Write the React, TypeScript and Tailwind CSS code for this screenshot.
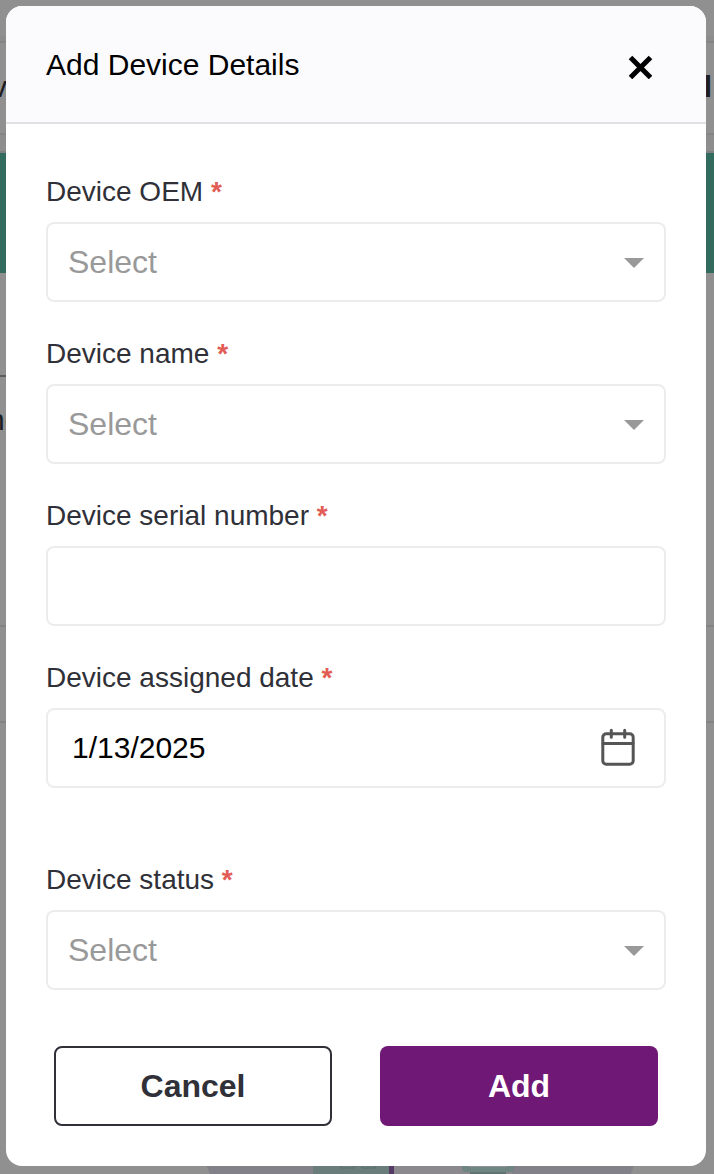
import React, { useState } from 'react';

const labelClass = 'text-[28px] leading-9 text-[#2f3038]';
const boxClass = 'block w-full h-20 rounded-lg border-2 border-[#ececec] bg-white outline-none';

const Required: React.FC = () => <span className="font-bold text-[#e25c56]">*</span>;

const SelectField: React.FC<{ id: string; label: string; options: string[] }> = ({ id, label, options }) => {
  const [value, setValue] = useState('');

  return (
    <div className="flex flex-col gap-3">
      <label htmlFor={id} className={labelClass}>
        {label} <Required />
      </label>
      <div className="relative">
        <select
          id={id}
          value={value}
          onChange={(e) => setValue(e.target.value)}
          className={`${boxClass} appearance-none px-5 text-[32px] text-[#999999]`}
        >
          <option value="">Select</option>
          {options.map((option) => (
            <option key={option}>{option}</option>
          ))}
        </select>
        <svg className="pointer-events-none absolute right-5 top-9 h-[10px] w-[22px]" viewBox="0 0 22 10" aria-hidden="true">
          <path d="M0 0h20L10 10z" fill="#999999" />
        </svg>
      </div>
    </div>
  );
};

/* Page behind the dialog, already dimmed */
const Backdrop: React.FC = () => (
  <div className="absolute inset-0 flex flex-col overflow-hidden bg-[#909090]" aria-hidden="true">
    <div className="h-9 shrink-0" />
    <div className="h-[7px] shrink-0 border-t border-b-2 border-t-[#8c8c8c] border-b-[#848484] bg-[#8d8d8d]" />
    <div className="flex h-[92px] shrink-0 items-center justify-between border-b-2 border-[#848484] pb-1 text-[30px] text-[#1d1e22]">
      <span className="-ml-2">v</span>
      <span className="mr-[2px] font-bold">l</span>
    </div>
    <div className="h-[18px] shrink-0 border-b-2 border-[#808080] bg-[#8d8d8d]" />
    <div className="h-[120px] shrink-0 bg-[#346b5f]" />
    <div className="flex h-[104px] w-1/2 shrink-0 border-b-2 border-[#5c5c5c]" />
    <div className="h-[250px] shrink-0 border-b-2 border-[#848484] pt-5 text-[30px] text-[#1d1e22]">
      <span className="-ml-3">ne</span>
    </div>
    <div className="h-24 shrink-0 border-b-2 border-[#848484]" />
    <div className="flex grow items-end justify-end pr-[74px]">
      <svg className="h-5 w-[440px]" viewBox="0 0 440 20" aria-hidden="true">
        <path d="M5 8h430l-4 12H10z" fill="#828089" />
        <path d="M194 8h118v12H194z" fill="#8b888e" />
        <path d="M113 8h76v12h-76z" fill="#6a7d7b" />
        <path d="M141 8h13v6h-13zM162 8h13v6h-13z" fill="none" stroke="#586e6b" />
        <path d="M189 8h5v12h-5z" fill="#543a64" />
        <path d="M262 8h52v6q0 4-4 4h-44q-4 0-4-4z" fill="#6e8582" />
        <path d="M267 8h42l-2 5h-38z" fill="#939195" />
        <path d="M270 18h36v2h-36z" fill="#607572" />
      </svg>
    </div>
  </div>
);

const App: React.FC = () => {
  const [date, setDate] = useState('1/13/2025');
  const [serial, setSerial] = useState('');

  return (
    <div className="relative min-h-screen pt-[6px] pr-2 pb-2 pl-[6px] font-['Liberation_Sans',Arial,sans-serif]">
      <Backdrop />

      <div role="dialog" aria-labelledby="dialog-title" className="relative overflow-hidden rounded-2xl bg-white">
        <header className="flex h-[118px] items-center justify-between border-b-2 border-[#e1e1e4] bg-[#fbfbfe] px-10 pt-0.5">
          <h2 id="dialog-title" className="text-[30px] leading-10 text-black">Add Device Details</h2>
          <button type="button" aria-label="Close" className="p-3">
            <svg className="h-7 w-7" viewBox="0 0 28 28" aria-hidden="true">
              <path d="M4.5 6.5L24.5 26.5M24.5 6.5L4.5 26.5" stroke="#000" strokeWidth="5" />
            </svg>
          </button>
        </header>

        <form className="px-10 pt-[50px] pb-10" onSubmit={(e) => e.preventDefault()}>
          <div className="flex flex-col gap-[34px]">
            <SelectField id="oem" label="Device OEM" options={['Omron', 'Withings']} />
            <SelectField id="name" label="Device name" options={['Blood pressure monitor', 'Weight scale']} />

            <div className="flex flex-col gap-3">
              <label htmlFor="serial" className={labelClass}>
                Device serial number <Required />
              </label>
              <input
                id="serial"
                type="text"
                value={serial}
                onChange={(e) => setSerial(e.target.value)}
                className={`${boxClass} px-6 text-[30px] text-black`}
              />
            </div>

            <div className="mb-10 flex flex-col gap-3">
              <label htmlFor="date" className={labelClass}>
                Device assigned date <Required />
              </label>
              <div className="relative">
                <input
                  id="date"
                  type="text"
                  value={date}
                  onChange={(e) => setDate(e.target.value)}
                  className={`${boxClass} px-6 text-[30px] text-black`}
                />
                <button type="button" aria-label="Open calendar" className="absolute right-7 top-5">
                  <svg className="h-10 w-10" viewBox="0 0 40 40" fill="none" stroke="#555555" strokeWidth="3" strokeLinecap="round" aria-hidden="true">
                    <rect x="4.8" y="5.8" width="30.4" height="30.4" rx="3.5" />
                    <path d="M5 15.6h30M13.3 2.3v7M26.7 2.3v7" />
                  </svg>
                </button>
              </div>
            </div>

            <SelectField id="status" label="Device status" options={['Active', 'Inactive']} />
          </div>

          <div className="mt-14 grid grid-cols-2 gap-12 px-2">
            <button type="button" className="h-20 rounded-lg border-2 border-[#2f3038] bg-white text-[32px] font-bold text-[#2f3038]">
              Cancel
            </button>
            <button type="submit" className="h-20 rounded-lg bg-[#701876] text-[32px] font-bold text-white">
              Add
            </button>
          </div>
        </form>
      </div>
    </div>
  );
};

export default App;
